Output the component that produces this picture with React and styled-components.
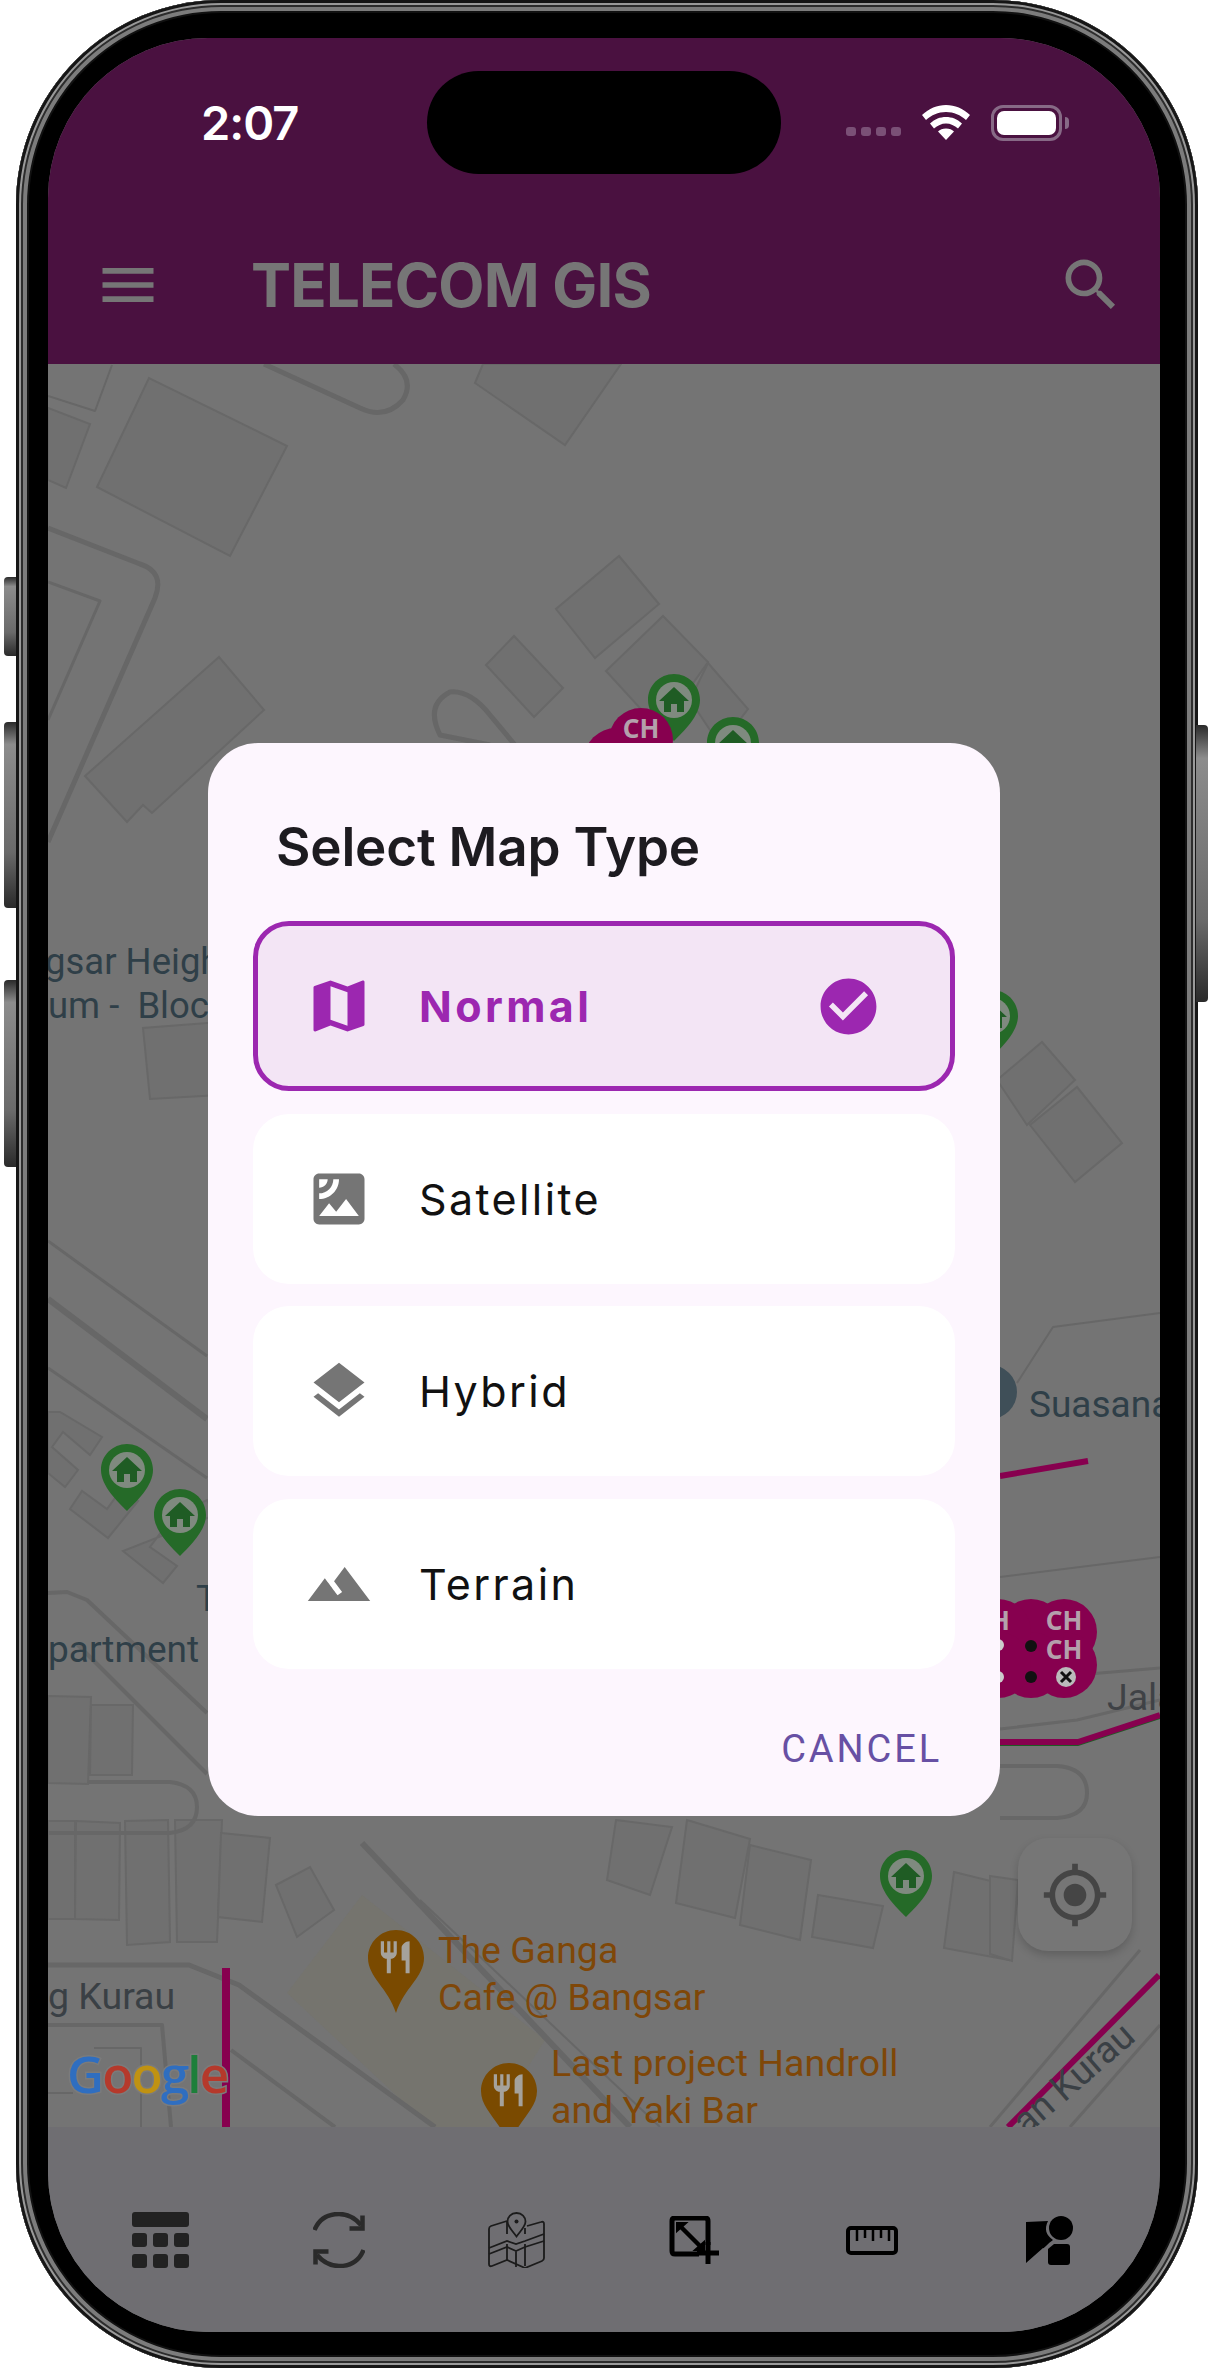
import React from 'react';
import styled, {createGlobalStyle} from 'styled-components';
import {MdMenu, MdSearch, MdMap, MdSatellite, MdLayers, MdTerrain, MdCheckCircle, MdMyLocation} from 'react-icons/md';

const GlobalStyle = createGlobalStyle`
  html, body {
    margin: 0;
    padding: 0;
    background: #fff;
    font-family: Inter, "Liberation Sans", sans-serif;
  }
`;

const Page = styled.div`
  width: 1208px;
  height: 2368px;
  overflow: hidden;
  padding-left: 16px;
  box-sizing: border-box;
`;

const Frame = styled.div`
  position: relative;
  width: 1182px;
  height: 2368px;
  box-sizing: border-box;
  padding: 38px 38px 36px 32px;
  background: #000;
  border-radius: 205px;
  box-shadow:
    inset 0 0 0 3px #161616,
    inset 0 0 0 5px #9a9a9a,
    inset 0 0 0 7px #2c2c2c,
    inset 0 0 0 11px #7c7c7c,
    inset 0 0 0 13px #111;
`;

const SideButton = styled.div`
  position: absolute;
  width: 12px;
  top: ${p => p.$top}px;
  height: ${p => p.$height}px;
  ${p => p.$right ? 'right: -10px; border-radius: 0 4px 4px 0;' : 'left: -12px; border-radius: 4px 0 0 4px;'}
  background: linear-gradient(180deg, #2a2a2a 0%, #8c8c8c 12%, #6a6a6a 70%, #2a2a2a 100%);
`;

const Screen = styled.div`
  position: relative;
  display: flex;
  flex-direction: column;
  height: 100%;
  overflow: hidden;
  border-radius: 160px;
  background: #747474;
`;

const AppBar = styled.header`
  flex: 0 0 326px;
  display: flex;
  flex-direction: column;
  background: #4a1140;
`;

const StatusRow = styled.div`
  display: grid;
  grid-template-columns: 379px 354px 1fr;
  align-items: center;
  height: 103px;
  margin-top: 33px;
`;

const Clock = styled.div`
  padding-left: 153px;
  font-size: 47px;
  font-weight: 600;
  letter-spacing: -1px;
  color: #fff;
`;

const Island = styled.div`
  height: 103px;
  border-radius: 52px;
  background: #000;
`;

const StatusIcons = styled.div`
  display: flex;
  align-items: center;
  padding-left: 65px;
`;

const SignalDots = styled.div`
  display: flex;
  gap: 5px;
  margin: 17px 21px 0 0;
`;

const SignalDot = styled.span`
  width: 10px;
  height: 9px;
  border-radius: 3px;
  background: #7a5076;
`;

const Battery = styled.div`
  position: relative;
  width: 71px;
  height: 36px;
  margin-left: 21px;
  box-sizing: border-box;
  padding: 3px;
  border: 3px solid #876a86;
  border-radius: 12px;

  &::after {
    content: '';
    position: absolute;
    right: -10px;
    top: 9px;
    width: 4px;
    height: 12px;
    border-radius: 0 4px 4px 0;
    background: #876a86;
  }
`;

const BatteryFill = styled.div`
  height: 100%;
  border-radius: 7px;
  background: #fff;
`;

const Toolbar = styled.div`
  flex: 1;
  display: flex;
  align-items: center;
  padding: 32px 35px 0 46px;
  color: #767676;
`;

const Title = styled.h1`
  flex: 1;
  margin: 0 0 0 89px;
  font-family: Inter, sans-serif;
  font-size: 60px;
  font-weight: 700;
  letter-spacing: -0.8px;
  color: #767676;
`;

const MapArea = styled.main`
  position: relative;
  flex: 1;
  overflow: hidden;
`;

const MapSvg = styled.svg`
  display: block;
  width: 100%;
  height: 100%;
`;

const Building = styled.polygon`
  fill: #707070;
  stroke: #686868;
  stroke-width: 2;
`;

const Road = styled.path`
  fill: none;
  stroke: #676767;
  stroke-width: ${p => p.$w || 4}px;
  stroke-linejoin: round;
`;

const Cable = styled.path`
  fill: none;
  stroke: #87004f;
  stroke-width: ${p => p.$w || 6}px;
`;

const PlaceText = styled.text`
  font-family: Roboto, sans-serif;
  font-size: ${p => p.$size || 37.500}px;
  fill: ${p => p.$fill || '#2f3f48'};
  white-space: pre;
`;

const PinText = styled.text`
  font-family: "Noto Sans", sans-serif;
  font-size: 26px;
  font-weight: 700;
  fill: #b4a0ac;
  text-anchor: middle;
`;

const LogoText = styled.text`
  font-family: "Open Sans", sans-serif;
  font-size: 51px;
  font-weight: 600;
  letter-spacing: -1.8px;
  paint-order: stroke;
  stroke: #7b7b7b;
  stroke-width: 3px;
`;

const LocateButton = styled.div`
  position: absolute;
  right: 28px;
  bottom: 176px;
  width: 114px;
  height: 113px;
  display: flex;
  align-items: center;
  justify-content: center;
  border-radius: 30px;
  background: #767676;
  box-shadow: 0 4px 8px rgba(0, 0, 0, 0.18);
  color: #454545;
`;

const BottomBar = styled.nav`
  flex: 0 0 205px;
  display: grid;
  grid-template-columns: repeat(6, 177.800px);
  align-items: center;
  justify-items: center;
  box-sizing: border-box;
  padding: 21px 0 0 24px;
  background: #6f6e72;
`;

const Scrim = styled.div`
  position: absolute;
  inset: 0;
  display: flex;
  justify-content: center;
  align-items: flex-start;
  padding-top: 705px;
`;

const Dialog = styled.section`
  width: 792px;
  height: 1073px;
  box-sizing: border-box;
  padding: 0 45px;
  border-radius: 50px;
  background: #fdf6fe;
`;

const DialogTitle = styled.h2`
  margin: 0;
  height: 178px;
  padding: 74px 0 0 23px;
  box-sizing: border-box;
  font-size: 53px;
  line-height: 60px;
  font-weight: 600;
  letter-spacing: -0.2px;
  color: #1d1b20;
`;

const TileList = styled.div`
  display: flex;
  flex-direction: column;
  gap: 22.500px;
`;

const Tile = styled.div`
  display: flex;
  align-items: center;
  height: 170px;
  box-sizing: border-box;
  padding: 0 68px 0 47px;
  border: 5px solid ${p => p.$selected ? '#9c27b0' : 'transparent'};
  border-radius: 36px;
  background: ${p => p.$selected ? '#f3e5f5' : '#fff'};
  color: ${p => p.$selected ? '#9c27b0' : '#757575'};
`;

const TileLabel = styled.span`
  flex: 1;
  margin-left: 46px;
  font-size: 43px;
  letter-spacing: ${p => p.$selected ? 3.400 : 2.400}px;
  font-weight: ${p => p.$selected ? 700 : 400};
  color: ${p => p.$selected ? '#9c27b0' : '#111'};
`;

const Actions = styled.div`
  display: flex;
  justify-content: flex-end;
  padding: 58px 13px 0 0;
`;

const CancelButton = styled.span`
  font-family: Roboto, sans-serif;
  font-size: 38px;
  font-weight: 400;
  letter-spacing: 2.900px;
  color: #6750a4;
`;

const buildings = [
  '97,487 149,378 287,446 230,556',
  '483,364 475,383 565,445 621,364',
  '48,408 90,424 66,488 48,480',
  '85,776 219,657 264,710 152,813 143,805 127,822',
  '619,556 659,604 595,658 556,609',
  '514,636 563,688 534,717 486,665',
  '663,616 708,662 660,730 606,671',
  '708,663 748,709 720,745 690,700',
  '1042,1042 1075,1080 1027,1125 997,1080',
  '1077,1087 1122,1143 1075,1182 1030,1125',
  '143,1028 150,1099 220,1095 220,1022',
  '48,1412 60,1412 102,1437 90,1455 63,1432 52,1447 78,1470 65,1487 48,1473',
  '70,1509 82,1491 107,1509 120,1491 138,1501 108,1538',
  '123,1551 163,1583 177,1566 150,1547 173,1516 207,1500 215,1515',
  '48,1696 91,1697 88,1784 48,1783',
  '91,1705 133,1705 132,1775 90,1775',
  '48,1821 75,1821 75,1919 48,1919',
  '76,1821 120,1823 119,1920 75,1919',
  '125,1821 168,1820 170,1942 127,1945',
  '175,1820 222,1820 217,1942 177,1942',
  '221,1833 270,1838 262,1922 218,1917',
  '276,1885 310,1867 334,1910 297,1937',
  '616,1820 672,1827 650,1895 607,1880',
  '687,1820 750,1839 735,1918 676,1903',
  '750,1845 811,1860 800,1940 740,1925',
  '818,1895 883,1906 873,1948 812,1937',
  '954,1872 1019,1888 1009,1960 944,1948',
  '990,1876 1018,1880 1012,1961 990,1954',
];

const roads = [
  {d: 'M264 364 L360 408 Q385 420 403 400 Q415 380 394 364', w: 5},
  {d: 'M48 396 L95 411 L112 365', w: 2},
  {d: 'M48 528 L140 564 Q165 572 155 598 L48 842', w: 5},
  {d: 'M48 582 L100 601 L48 720', w: 3},
  {d: 'M490 745 L440 735 Q425 705 450 692 Q470 690 490 715 L515 745', w: 5},
  {d: 'M48 1241 L207 1356', w: 3},
  {d: 'M48 1299 L207 1419', w: 6},
  {d: 'M48 1368 L207 1478', w: 3},
  {d: 'M48 1593 L67 1592 L87 1600 L207 1713', w: 4},
  {d: 'M77 1644 L207 1774', w: 4},
  {d: 'M88 1782 L170 1782 Q197 1785 197 1807 Q197 1830 170 1833 L48 1833', w: 4},
  {d: 'M48 1965 L189 1965 L239 1985 L435 2127', w: 5},
  {d: 'M231 2050 L335 2127', w: 4},
  {d: 'M48 2025 L162 2025 L171 2127', w: 4},
  {d: 'M94 2048 L141 2048 L141 2127 M48 2093 L73 2093', w: 2},
  {d: 'M362 1843 L630 2127', w: 6},
  {d: 'M420 1900 L660 2127', w: 2},
  {d: 'M1017 1383 L1053 1327 L1160 1313', w: 2},
  {d: 'M1000 1577 L1160 1557', w: 2},
  {d: 'M1000 1729 L1077 1720 L1160 1700 M1077 1675 L1160 1668', w: 3},
  {d: 'M1000 1766 L1057 1766 Q1087 1768 1087 1793 Q1087 1816 1057 1818 L1000 1818', w: 4},
  {d: 'M1140 1950 L990 2127', w: 3},
  {d: 'M1160 2025 L1070 2127', w: 3},
];

const cables = [
  {d: 'M226 1968 L226 2127', w: 8},
  {d: 'M1159 1975 L1008 2127', w: 6},
  {d: 'M1000 1476 L1088 1461', w: 6},
  {d: 'M1000 1742 L1078 1742 L1160 1715', w: 6},
];

const homePins = [
  {x: 674, y: 674}, {x: 733, y: 717}, {x: 992, y: 990},
  {x: 127, y: 1444}, {x: 180, y: 1489}, {x: 906, y: 1850},
];

const foodPins = [{x: 396, y: 1930}, {x: 509, y: 2063}];

// round pink blobs of the cabinet cluster on the right
const clusterBlobs = [
  [1064, 1632], [1064, 1665], [1031, 1632], [1031, 1665], [998, 1632], [998, 1665],
];

// home marker, x/y is the top centre of the pin
const HomePin = ({x, y}) => (
  <g transform={`translate(${x - 26} ${y})`}>
    <path d="M26 0C11.6 0 0 11.6 0 26c0 16 17 32 26 41 9-9 26-25 26-41C52 11.6 40.4 0 26 0z" fill="#256a28"/>
    <circle cx="26" cy="26" r="18" fill="#7f8a7f"/>
    <path d="M26 13L11 27h5v11h7v-8h6v8h7V27h5z" fill="#1f5c24"/>
  </g>
);

const FoodPin = ({x, y}) => (
  <g transform={`translate(${x - 28} ${y})`}>
    <path d="M28 0C12.5 0 0 12.5 0 28c0 19 20 30 28 55 8-25 28-36 28-55C56 12.5 43.500 0 28 0z" fill="#7a4a00"/>
    <path transform="translate(8 8) scale(1.6)" d="M11 9H9V2H7v7H5V2H3v7c0 2.120 1.660 3.840 3.750 3.970V22h2.500v-9.030C11.340 12.840 13 11.120 13 9V2h-2v7zm5-3v8h2.500v8H21V2c-2.760 0-5 2.240-5 4z" fill="#a5a29c"/>
  </g>
);

const MapDrawing = () => (
  <MapSvg viewBox="48 364 1112 1763" preserveAspectRatio="none">
    <polygon points="287,1993 362,1895 545,2040 490,2127 430,2127" fill="#75746e"/>
    {buildings.map(points => <Building key={points} points={points}/>)}
    {roads.map(r => <Road key={r.d} d={r.d} $w={r.w}/>)}
    <path d="M1000 1745 L1078 1745 L1160 1718" fill="none" stroke="#1f5c24" strokeWidth="2"/>
    {cables.map(c => <Cable key={c.d} d={c.d} $w={c.w}/>)}

    {homePins.map(p => <HomePin key={p.x} {...p}/>)}
    {foodPins.map(p => <FoodPin key={p.x} {...p}/>)}

    <circle cx="616" cy="760" r="32" fill="#87004f"/>
    <circle cx="641" cy="740" r="32" fill="#87004f"/>
    <PinText x="641" y="738">CH</PinText>

    {clusterBlobs.map(([cx, cy]) => <circle key={`${cx}-${cy}`} cx={cx} cy={cy} r="33" fill="#87004f"/>)}
    <PinText x="1000" y="1630">H</PinText>
    <PinText x="1064" y="1630">CH</PinText>
    <PinText x="1064" y="1659">CH</PinText>
    <circle cx="1031" cy="1646" r="6" fill="#111"/>
    <circle cx="1031" cy="1677" r="6" fill="#111"/>
    <circle cx="998" cy="1645" r="6" fill="#ccc"/>
    <circle cx="998" cy="1677" r="6" fill="#ccc"/>
    <circle cx="1066" cy="1677" r="10" fill="#bbb"/>
    <path d="M1061 1672 L1071 1682 M1071 1672 L1061 1682" stroke="#111" strokeWidth="3"/>

    <circle cx="990" cy="1392" r="27" fill="#3f4f58"/>

    <PlaceText x="45" y="974" $size={36.500}>gsar Heigh</PlaceText>
    <PlaceText x="48" y="1018" $size={36.500}>um -  Bloc</PlaceText>
    <PlaceText x="48" y="1662" $size={37}>partment</PlaceText>
    <PlaceText x="196" y="1611" $size={37}>T</PlaceText>
    <PlaceText x="1029" y="1417" $size={37}>Suasana</PlaceText>
    <PlaceText x="1107" y="1710" $fill="#3f4246">Jala</PlaceText>
    <PlaceText x="48" y="2009" $fill="#3a4045">g Kurau</PlaceText>
    <PlaceText x="438" y="1963" $fill="#7f4708">The Ganga</PlaceText>
    <PlaceText x="438" y="2010" $fill="#7f4708">Cafe @ Bangsar</PlaceText>
    <PlaceText x="551" y="2076" $fill="#7f4708">Last project Handroll</PlaceText>
    <PlaceText x="551" y="2123" $fill="#7f4708">and Yaki Bar</PlaceText>
    <PlaceText transform="rotate(-41 1026 2136)" x="1026" y="2136" $fill="#3a4045">an Kurau</PlaceText>

    <LogoText x="67" y="2093">
      <tspan fill="#2f6ec0">G</tspan>
      <tspan fill="#b5392b">o</tspan>
      <tspan fill="#c09212">o</tspan>
      <tspan fill="#2f6ec0">g</tspan>
      <tspan fill="#1d7f3a">l</tspan>
      <tspan fill="#b5392b">e</tspan>
    </LogoText>
  </MapSvg>
);

const WifiIcon = () => (
  <svg width="48" height="35" viewBox="0 0 48 35" fill="#fff">
    <path d="M24 0C15 0 7 3.500 0 10l4 5c5.500-5 12-8 20-8s14.500 3 20 8l4-5C41 3.500 33 0 24 0z"/>
    <path d="M24 12c-6 0-11 2-16 6.500l4 5c3.500-3 7.500-5 12-5s8.500 2 12 5l4-5C35 14 30 12 24 12z"/>
    <path d="M24 23.500c-3.500 0-6 1-8 3L24 35l8-8.500c-2-2-4.500-3-8-3z"/>
  </svg>
);

const GridIcon = () => (
  <svg width="57" height="56" viewBox="0 0 57 56" fill="#222">
    <rect width="57" height="15" rx="3"/>
    {[21, 42].map(y => [0, 21, 42].map(x => (
      <rect key={`${x}-${y}`} x={x} y={y} width="15" height="14" rx="3"/>
    )))}
  </svg>
);

const SyncIcon = () => (
  <svg width="52" height="56" viewBox="0 0 52 56" fill="none" stroke="#2a2a2a" strokeWidth="4.500">
    <path d="M1.500 18C6 7 15 2 26 2c9 0 16 4 22 11"/>
    <path d="M49.500 3.500v13h-13" strokeWidth="4.500"/>
    <path d="M50.500 38C46 49 37 54 26 54c-9 0-16-4-22-11"/>
    <path d="M2.500 52.500v-13h13"/>
  </svg>
);

const FoldedMapIcon = () => (
  <svg width="57" height="56" viewBox="0 0 57 56" fill="none" stroke="#1b1b1b" strokeWidth="1.800">
    <path d="M19 9L3 14q-2 .7-2 3v35q0 3 3 2l15-6 18 8 17-7q2-.8 2-3V12q0-3-3-2l-14 4"/>
    <path d="M28.500 1C23 1 19.500 5 19.500 9.500c0 5 5.500 10 9 15 3.500-5 9-10 9-15C37.500 5 34 1 28.500 1z"/>
    <circle cx="28.500" cy="9.500" r="2" fill="#1b1b1b" stroke="none"/>
    <path d="M19 9v13M19 32v16M37 16v6M37 32v22"/>
    <path d="M1 36l18-7 9 3 9-3 19-7M1 42l18-7 9 4v16M37 35l19-6M37 35l-9 4"/>
  </svg>
);

const ExpandAddIcon = () => (
  <svg width="50" height="49" viewBox="0 0 50 49" fill="none" stroke="#000">
    <path d="M30 38H6q-3 0-3-3V5q0-3 3-3h30q3 0 3 3v24" strokeWidth="5"/>
    <path d="M11 10l21 21" strokeWidth="4.500"/>
    <path d="M8 15V7h9z M35 26v8h-9z" fill="#000" strokeWidth="2"/>
    <path d="M39 26v22M28 37h22" strokeWidth="5"/>
  </svg>
);

const RulerIcon = () => (
  <svg width="52" height="29" viewBox="0 0 52 29" fill="none" stroke="#000" strokeWidth="4">
    <rect x="2" y="2" width="48" height="25" rx="3"/>
    <path d="M11 3v12M19 3v9M27 3v12M35 3v9M43 3v12" strokeWidth="2.500"/>
  </svg>
);

const ShapesIcon = () => (
  <svg width="48" height="49" viewBox="0 0 48 49" fill="#000">
    <path d="M0 6l22-1c-4 8-2 14 5 19-6 4-9 9-10 8L0 47z"/>
    <circle cx="35" cy="12" r="12"/>
    <path d="M28 28h13q3 0 3 3v15q0 3-3 3H25q-3 0-3-3V33z"/>
  </svg>
);

const mapTypes = [
  {label: 'Normal', Icon: MdMap, selected: true},
  {label: 'Satellite', Icon: MdSatellite},
  {label: 'Hybrid', Icon: MdLayers},
  {label: 'Terrain', Icon: MdTerrain},
];

export default function App() {
  return (
    <Page>
      <GlobalStyle/>
      <Frame>
        <SideButton $top={577} $height={79}/>
        <SideButton $top={722} $height={186}/>
        <SideButton $top={980} $height={187}/>
        <SideButton $right $top={725} $height={277}/>

        <Screen>
          <AppBar>
            <StatusRow>
              <Clock>2:07</Clock>
              <Island/>
              <StatusIcons>
                <SignalDots>
                  <SignalDot/><SignalDot/><SignalDot/><SignalDot/>
                </SignalDots>
                <WifiIcon/>
                <Battery><BatteryFill/></Battery>
              </StatusIcons>
            </StatusRow>
            <Toolbar>
              <MdMenu size={68}/>
              <Title>TELECOM GIS</Title>
              <MdSearch size={68}/>
            </Toolbar>
          </AppBar>

          <MapArea>
            <MapDrawing/>
            <LocateButton><MdMyLocation size={68}/></LocateButton>
          </MapArea>

          <BottomBar>
            <GridIcon/>
            <SyncIcon/>
            <FoldedMapIcon/>
            <ExpandAddIcon/>
            <RulerIcon/>
            <ShapesIcon/>
          </BottomBar>

          <Scrim>
            <Dialog>
              <DialogTitle>Select Map Type</DialogTitle>
              <TileList>
                {mapTypes.map(({label, Icon, selected}) => (
                  <Tile key={label} $selected={selected}>
                    <Icon size={68}/>
                    <TileLabel $selected={selected}>{label}</TileLabel>
                    {selected && <MdCheckCircle size={67}/>}
                  </Tile>
                ))}
              </TileList>
              <Actions>
                <CancelButton>CANCEL</CancelButton>
              </Actions>
            </Dialog>
          </Scrim>
        </Screen>
      </Frame>
    </Page>
  );
}
